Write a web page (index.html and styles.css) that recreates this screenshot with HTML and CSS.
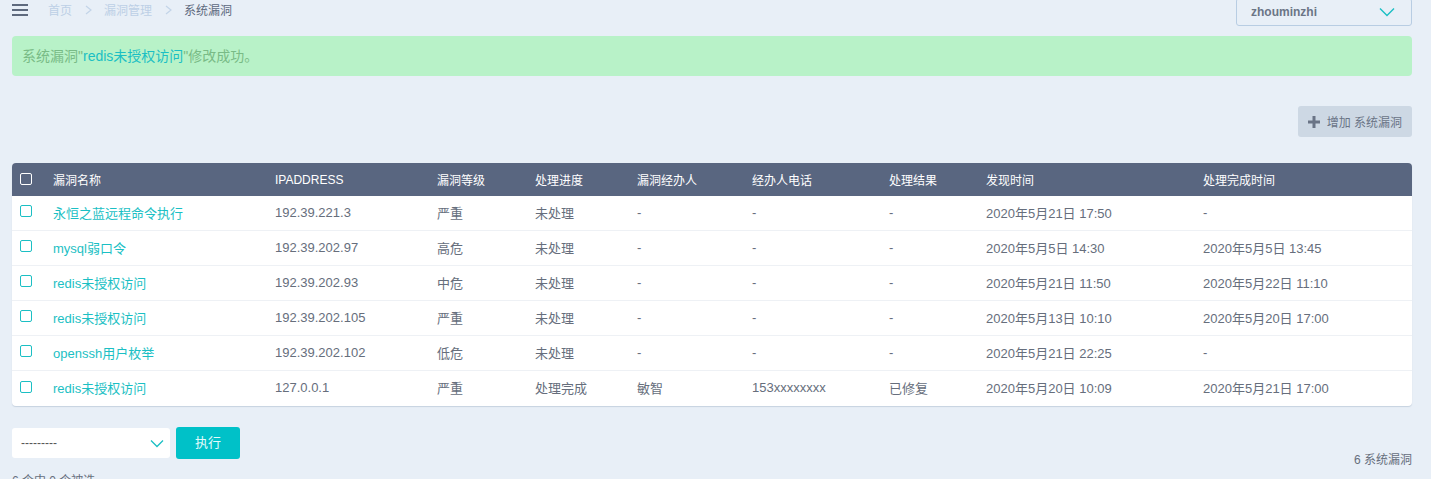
FILE: index.html
```html
<!DOCTYPE html>
<html lang="zh">

<head>
    <meta charset="UTF-8">
    <meta name="viewport" content="width=device-width, initial-scale=1.0">
    <title>系统漏洞</title>

    <link rel="stylesheet" href="styles.css">
</head>

<body>

    <div class="page">
        <div class="topbar">
            <div class="topbar__left">
                <div class="hamburger"><span></span><span></span><span></span></div>
                <div class="crumbs">
                    <span class="crumbs__link">首页</span>
                    <svg class="crumbs__sep" width="7" height="10" viewBox="0 0 7 10"><path d="M1 1 L6 5 L1 9" fill="none" stroke="#c3d4e8" stroke-width="1.2"/></svg>
                    <span class="crumbs__link">漏洞管理</span>
                    <svg class="crumbs__sep" width="7" height="10" viewBox="0 0 7 10"><path d="M1 1 L6 5 L1 9" fill="none" stroke="#c3d4e8" stroke-width="1.2"/></svg>
                    <span class="crumbs__current">系统漏洞</span>
                </div>
            </div>
            <div class="user-select">
                <span>zhouminzhi</span>
                <svg width="16" height="10" viewBox="0 0 16 10"><path d="M1 1.5 L8 8.5 L15 1.5" fill="none" stroke="#1bbfc4" stroke-width="1.4"/></svg>
            </div>
        </div>

        <div class="alert">系统漏洞"<span class="alert__link">redis未授权访问</span>"修改成功。</div>

        <div class="tools">
            <div class="add-button">
                <svg width="12" height="12" viewBox="0 0 12 12"><path d="M6 0 V12 M0 6 H12" stroke="#6a7486" stroke-width="3"/></svg>
                增加 系统漏洞
            </div>
        </div>

        <table class="result-list">
            <colgroup>
                <col style="width:33px">
                <col style="width:222px">
                <col style="width:162px">
                <col style="width:98px">
                <col style="width:102px">
                <col style="width:115px">
                <col style="width:137px">
                <col style="width:97px">
                <col style="width:217px">
                <col>
            </colgroup>
            <thead>
                <tr>
                    <th><span class="check check--head"></span></th>
                    <th>漏洞名称</th>
                    <th>IPADDRESS</th>
                    <th>漏洞等级</th>
                    <th>处理进度</th>
                    <th>漏洞经办人</th>
                    <th>经办人电话</th>
                    <th>处理结果</th>
                    <th>发现时间</th>
                    <th>处理完成时间</th>
                </tr>
            </thead>
            <tbody>
                <tr>
                    <td><span class="check"></span></td>
                    <td><a class="row-link">永恒之蓝远程命令执行</a></td>
                    <td>192.39.221.3</td>
                    <td>严重</td>
                    <td>未处理</td>
                    <td>-</td>
                    <td>-</td>
                    <td>-</td>
                    <td>2020年5月21日 17:50</td>
                    <td>-</td>
                </tr>
                <tr>
                    <td><span class="check"></span></td>
                    <td><a class="row-link">mysql弱口令</a></td>
                    <td>192.39.202.97</td>
                    <td>高危</td>
                    <td>未处理</td>
                    <td>-</td>
                    <td>-</td>
                    <td>-</td>
                    <td>2020年5月5日 14:30</td>
                    <td>2020年5月5日 13:45</td>
                </tr>
                <tr>
                    <td><span class="check"></span></td>
                    <td><a class="row-link">redis未授权访问</a></td>
                    <td>192.39.202.93</td>
                    <td>中危</td>
                    <td>未处理</td>
                    <td>-</td>
                    <td>-</td>
                    <td>-</td>
                    <td>2020年5月21日 11:50</td>
                    <td>2020年5月22日 11:10</td>
                </tr>
                <tr>
                    <td><span class="check"></span></td>
                    <td><a class="row-link">redis未授权访问</a></td>
                    <td>192.39.202.105</td>
                    <td>严重</td>
                    <td>未处理</td>
                    <td>-</td>
                    <td>-</td>
                    <td>-</td>
                    <td>2020年5月13日 10:10</td>
                    <td>2020年5月20日 17:00</td>
                </tr>
                <tr>
                    <td><span class="check"></span></td>
                    <td><a class="row-link">openssh用户枚举</a></td>
                    <td>192.39.202.102</td>
                    <td>低危</td>
                    <td>未处理</td>
                    <td>-</td>
                    <td>-</td>
                    <td>-</td>
                    <td>2020年5月21日 22:25</td>
                    <td>-</td>
                </tr>
                <tr>
                    <td><span class="check"></span></td>
                    <td><a class="row-link">redis未授权访问</a></td>
                    <td>127.0.0.1</td>
                    <td>严重</td>
                    <td>处理完成</td>
                    <td>敏智</td>
                    <td>153xxxxxxxx</td>
                    <td>已修复</td>
                    <td>2020年5月20日 10:09</td>
                    <td>2020年5月21日 17:00</td>
                </tr>
            </tbody>
        </table>

        <div class="footer">
            <div class="actions">
                <div class="action-select">
                    <span>---------</span>
                    <svg width="14" height="9" viewBox="0 0 14 9"><path d="M1 1.5 L7 7.5 L13 1.5" fill="none" stroke="#1bbfc4" stroke-width="1.3"/></svg>
                </div>
                <div class="run-button">执行</div>
            </div>
            <div class="paginator">6 系统漏洞</div>
        </div>
        <div class="counter">6 个中 0 个被选</div>
    </div>

</body>

</html>
```

FILE: styles.css
```css
body {
    margin: 0;
    background-color: #e8eff7;
    font-family: "Liberation Sans", "Noto Sans CJK SC", sans-serif;
    font-size: 13px;
    color: #666e7c;
    overflow: hidden;
}

.page {
    width: 1400px;
    padding: 0 12px;
}

.topbar {
    display: flex;
    justify-content: space-between;
    align-items: flex-start;
    height: 26px;
}

.topbar__left {
    display: flex;
    align-items: center;
    height: 19px;
}

.hamburger {
    display: flex;
    flex-direction: column;
    gap: 3px;
    width: 16px;
    margin-right: 20px;
}

.hamburger span {
    display: block;
    height: 2px;
    background-color: #5e6a7e;
}

.crumbs {
    display: flex;
    align-items: center;
    font-size: 12px;
}

.crumbs__link {
    color: #bdd0e6;
}

.crumbs__sep {
    margin: 0 12px 0 13px;
}

.crumbs__current {
    color: #5e6a7e;
}

.user-select {
    display: flex;
    justify-content: space-between;
    align-items: center;
    box-sizing: border-box;
    width: 176px;
    height: 28px;
    margin-top: -2px;
    padding: 0 16px 0 14px;
    border: 1px solid #b8cde3;
    border-radius: 3px;
    font-size: 12px;
    font-weight: bold;
    color: #6b7586;
}

.alert {
    margin-top: 10px;
    height: 40px;
    line-height: 40px;
    padding: 0 10px;
    border-radius: 4px;
    background-color: #b8f2c8;
    color: #79bb86;
    font-size: 14px;
}

.alert__link {
    color: #1bbfc4;
}

.tools {
    display: flex;
    justify-content: flex-end;
    margin-top: 30px;
}

.add-button {
    display: flex;
    align-items: center;
    gap: 7px;
    height: 31px;
    padding: 0 10px;
    border-radius: 3px;
    background-color: #cdd8e4;
    color: #6a7486;
    font-size: 12px;
}

.result-list {
    width: 1400px;
    margin-top: 26px;
    border-collapse: collapse;
    table-layout: fixed;
    background-color: #fff;
    border-radius: 4px;
    overflow: hidden;
    box-shadow: 0 1px 1px #c6d2df;
}

.result-list th {
    height: 33px;
    padding: 0 0 0 8px;
    text-align: left;
    font-weight: normal;
    font-size: 12px;
    color: #fff;
    background-color: #596680;
}

.result-list td {
    height: 32px;
    padding: 0 0 2px 8px;
    border-bottom: 1px solid #eef1f5;
    white-space: nowrap;
}

.result-list tbody tr:last-child td {
    border-bottom: none;
    height: 33px;
}

.row-link {
    color: #1bbfc4;
}

.check {
    display: block;
    box-sizing: border-box;
    width: 12px;
    height: 12px;
    border: 1.5px solid #1bbfc4;
    border-radius: 2px;
    margin-top: -2px;
}

.check--head {
    border-color: #fff;
    margin-top: -2px;
}

.footer {
    display: flex;
    justify-content: space-between;
    align-items: flex-start;
    margin-top: 21px;
}

.actions {
    display: flex;
    gap: 6px;
}

.action-select {
    display: flex;
    justify-content: space-between;
    align-items: center;
    box-sizing: border-box;
    width: 158px;
    height: 30px;
    margin-top: 1px;
    padding: 0 6px 0 9px;
    border-radius: 3px;
    background-color: #fff;
    color: #555;
    font-size: 12px;
}

.run-button {
    width: 64px;
    height: 32px;
    line-height: 32px;
    text-align: center;
    border-radius: 3px;
    background-color: #00c1c8;
    color: #e4fbfb;
    font-size: 13px;
}

.paginator {
    margin-top: 23px;
    font-size: 12px;
    color: #666e7c;
}

.counter {
    margin-top: 4px;
    font-size: 12px;
    color: #666e7c;
}
```
